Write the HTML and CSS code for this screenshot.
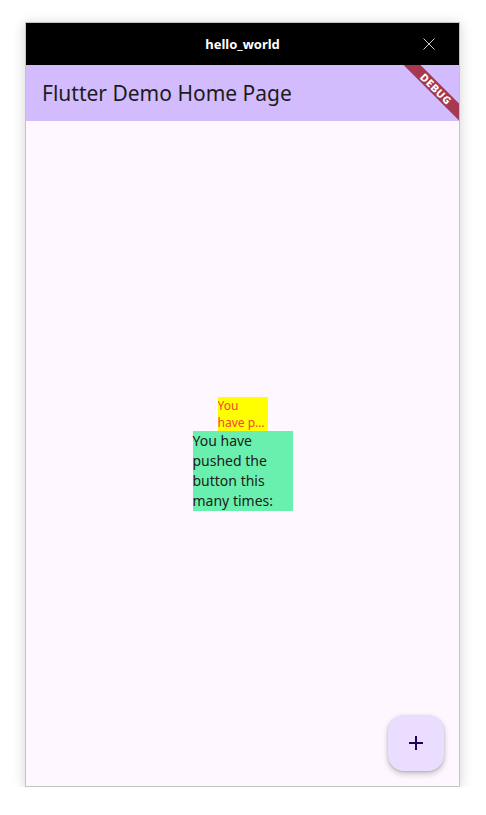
FILE: index.html
```html
<!DOCTYPE html>
<html>
<head>
<meta charset="utf-8">
<link rel="stylesheet" href="styles.css">
</head>
<body>
<div class="window">
  <div class="titlebar">
    <span class="title">hello_world</span>
    <svg class="close" width="12" height="12" viewBox="0 0 12 12"><path d="M0.5 0.5 L11.5 11.5 M11.5 0.5 L0.5 11.5" stroke="#cfcfcf" stroke-width="1" fill="none"/></svg>
  </div>
  <div class="app">
    <div class="appbar">Flutter Demo Home Page</div>
    <div class="content">
      <div class="column">
        <div class="yellow">You<br>have p…</div>
        <div class="green">You have pushed the button this many times:</div>
      </div>
    </div>
    <button class="fab"><svg width="16" height="16" viewBox="0 0 16 16"><path d="M8 1 V15 M1 8 H15" stroke="#21005d" stroke-width="2" fill="none"/></svg></button>
    <div class="banner-clip"><div class="banner">DEBUG</div></div>
  </div>
</div>
</body>
</html>
```
FILE: styles.css
```css
html, body {
  margin: 0;
  padding: 0;
  background: #ffffff;
}
body {
  padding: 22px 0 0 25px;
  font-family: "Noto Sans", "DejaVu Sans", sans-serif;
}
.window {
  width: 433px;
  height: 763px;
  border: 1px solid #c4c4c4;
  box-shadow: 0 2px 12px rgba(0,0,0,0.18);
  display: flex;
  flex-direction: column;
  background: #fef7ff;
}
.titlebar {
  height: 42px;
  background: #000;
  position: relative;
  display: flex;
  align-items: center;
  justify-content: center;
}
.title {
  color: #fff;
  font-weight: bold;
  font-size: 13px;
}
.close {
  position: absolute;
  right: 24px;
  top: 15px;
}
.app {
  flex: 1;
  display: flex;
  flex-direction: column;
  position: relative;
  overflow: hidden;
}
.appbar {
  height: 56px;
  background: #d2bcfd;
  display: flex;
  align-items: center;
  padding-left: 16px;
  font-size: 21px;
  color: #1d1b20;
}
.content {
  flex: 1;
  display: flex;
  align-items: center;
  justify-content: center;
}
.column {
  display: flex;
  flex-direction: column;
  align-items: center;
}
.yellow {
  width: 50px;
  height: 34px;
  background: #ffff00;
  color: #f44336;
  font-size: 12px;
  line-height: 17px;
  white-space: nowrap;
  overflow: hidden;
}
.green {
  width: 100px;
  height: 80px;
  background: #69f0ae;
  color: #1d1b20;
  font-size: 14px;
  line-height: 20px;
}
.fab {
  position: absolute;
  right: 15px;
  bottom: 15px;
  width: 56px;
  height: 56px;
  border: none;
  border-radius: 16px;
  background: #eaddff;
  box-shadow: 0 3px 6px rgba(0,0,0,0.2), 0 1px 3px rgba(0,0,0,0.15);
  display: flex;
  align-items: center;
  justify-content: center;
  padding: 0;
}
.banner-clip {
  position: absolute;
  top: 0;
  right: 0;
  width: 80px;
  height: 80px;
  overflow: hidden;
}
.banner {
  position: absolute;
  width: 120px;
  height: 12px;
  top: 18px;
  left: -3px;
  transform: rotate(45deg);
  background: rgba(160, 33, 50, 0.85);
  color: #fff;
  font-size: 10.5px;
  font-weight: 800;
  line-height: 12px;
  text-align: center;
  letter-spacing: 0.6px;
}
```
